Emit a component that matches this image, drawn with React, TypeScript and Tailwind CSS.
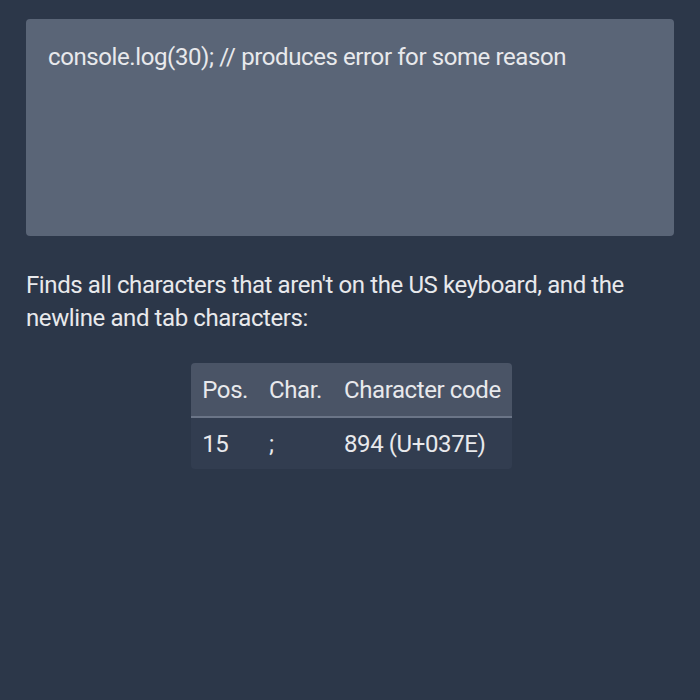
export default function App() {
  return (
    <div className="min-h-[700px] w-[700px] bg-[#2c3749] px-[26px] pt-[19px]" style={{ fontFamily: "Roboto, sans-serif" }}>
      <div className="h-[217px] rounded-[4px] bg-[#5a6577] px-[22px] pt-[23px] text-[24px] leading-[30px] text-[#e8e9ec] tracking-[-0.4px]">
        console.log(30); // produces error for some reason
      </div>
      <p className="mt-[33px] text-[24px] leading-[33px] text-[#e8e9ec] tracking-[-0.4px]">
        Finds all characters that aren't on the US keyboard, and the newline and tab characters:
      </p>
      <div className="mt-[28px] flex justify-center pl-[3px]">
        <table className="overflow-hidden rounded-[4px] text-[24px] text-[#e8e9ec] tracking-[-0.4px]">
          <thead>
            <tr className="h-[54px] border-b-2 border-[#6b7587] bg-[#4a5466]">
              <th className="pl-[11px] pr-[10px] text-left font-normal">Pos.</th>
              <th className="px-[11px] text-left font-normal">Char.</th>
              <th className="px-[11px] text-left font-normal">Character code</th>
            </tr>
          </thead>
          <tbody>
            <tr className="h-[52px] bg-[#323d50]">
              <td className="pl-[11px] pr-[10px]">15</td>
              <td className="px-[11px]">;</td>
              <td className="px-[11px]">894 (U+037E)</td>
            </tr>
          </tbody>
        </table>
      </div>
    </div>
  );
}
